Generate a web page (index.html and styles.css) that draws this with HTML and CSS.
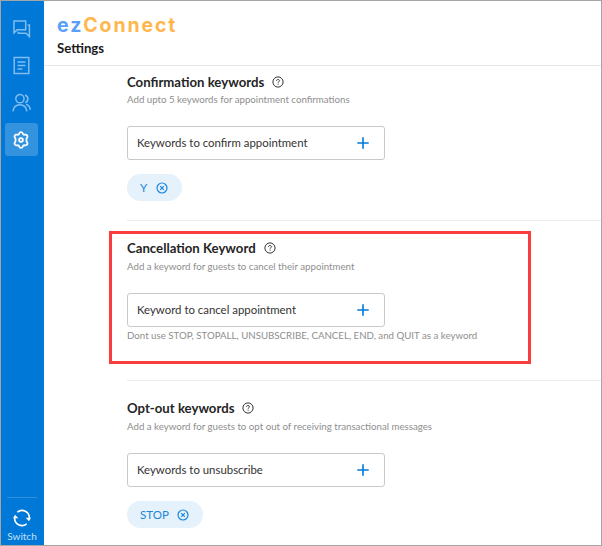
FILE: index.html
```
<!DOCTYPE html>
<html lang="en">
<head>
<meta charset="utf-8">
<title>ezConnect Settings</title>
<link rel="stylesheet" href="styles.css">
</head>
<body>
<svg class="defs" width="0" height="0" aria-hidden="true">
  <symbol id="help" viewBox="0 0 12 12"><circle cx="6" cy="6" r="5.1"/><path d="M4.500 4.900C4.500 4 5.200 3.500 6 3.500s1.500.5 1.500 1.200c0 .9-1.400 1-1.400 2M6.100 7.700v1"/></symbol>
  <symbol id="plus" viewBox="0 0 12 12"><path d="M6 .3v11.4M.3 6h11.4"/></symbol>
  <symbol id="remove" viewBox="0 0 12 12"><circle cx="6" cy="6" r="5"/><path d="M4.2 4.2l3.6 3.6M7.8 4.2L4.2 7.800"/></symbol>
</svg>
<div class="app">
  <nav class="sidebar">
    <a class="nav-item"><svg viewBox="0 0 24 24"><path d="M2.500 2.500h14.800v11.200H6.500L2.500 17.500zM19.800 7.500h2.200v14.700l-4.300-4.200H8v-1.900"/></svg></a>
    <a class="nav-item"><svg viewBox="0 0 24 24"><path d="M2.800 1.800h18.400v20.400H2.800zM7 7.500h10M7 12h10M7 16.500h6"/></svg></a>
    <a class="nav-item"><svg viewBox="0 0 24 24"><circle cx="10" cy="7.2" r="5.2"/><path d="M1.200 23.200c.7-5.500 3.900-8.500 8.800-8.500s8.100 3 8.800 8.500M16.500 2.600c4.600 1.600 4.700 7.600.3 9.500M17.800 14.300c2.900.8 4.700 3.200 5.400 6.900"/></svg></a>
    <a class="nav-item active"><svg viewBox="0 0 24 24"><path d="M12 1.600c1.500 0 2 .6 2.400 1.700.4 1.300 1.400 1.900 2.800 1.600 1.500-.3 2.300-.2 3.100 1.200.8 1.300.6 2-.4 3-.9 1.100-.9 4.700 0 5.800 1 1 1.200 1.700.4 3-.8 1.400-1.600 1.500-3.100 1.200-1.400-.3-2.400.3-2.800 1.600-.4 1.100-.9 1.700-2.400 1.700s-2-.6-2.400-1.700c-.4-1.300-1.400-1.900-2.800-1.600-1.500.3-2.300.2-3.100-1.200-.8-1.300-.6-2 .4-3 .9-1.100.9-4.700 0-5.800-1-1-1.200-1.700-.4-3 .8-1.400 1.600-1.500 3.100-1.200 1.400.3 2.400-.3 2.800-1.600.4-1.100.9-1.700 2.400-1.700z"/><circle cx="12" cy="12" r="2.500"/></svg></a>
    <div class="switch">
      <svg viewBox="0 0 18 18"><path d="M4.300 3.200A7.300 7.300 0 0 1 16.300 9.400M13.700 14.800A7.300 7.300 0 0 1 1.700 8.600"/><path class="tip" d="M12.700 8.700h5.300l-2 3.600zM0 9.300h5.300L2 5.700z"/></svg>
      <span>Switch</span>
    </div>
  </nav>
  <main class="page">
    <header class="header">
      <div class="logo"><span>ez</span>Connect</div>
      <h1>Settings</h1>
    </header>
    <section class="section">
      <h2>Confirmation keywords <svg class="help"><use href="#help"/></svg></h2>
      <p>Add upto 5 keywords for appointment confirmations</p>
      <div class="field"><span>Keywords to confirm appointment</span><svg class="plus"><use href="#plus"/></svg></div>
      <div class="chip chip-y">Y <svg class="remove"><use href="#remove"/></svg></div>
    </section>
    <section class="section highlighted">
      <h2>Cancellation Keyword <svg class="help"><use href="#help"/></svg></h2>
      <p>Add a keyword for guests to cancel their appointment</p>
      <div class="field"><span>Keyword to cancel appointment</span><svg class="plus"><use href="#plus"/></svg></div>
      <p class="hint">Dont use STOP, STOPALL, UNSUBSCRIBE, CANCEL, END, and QUIT as a keyword</p>
      <div class="outline"></div>
    </section>
    <section class="section">
      <h2>Opt-out keywords <svg class="help"><use href="#help"/></svg></h2>
      <p>Add a keyword for guests to opt out of receiving transactional messages</p>
      <div class="field"><span>Keywords to unsubscribe</span><svg class="plus"><use href="#plus"/></svg></div>
      <div class="chip chip-stop">STOP <svg class="remove"><use href="#remove"/></svg></div>
    </section>
  </main>
</div>
</body>
</html>
```
FILE: styles.css
```
* { box-sizing: border-box; }
body { margin: 0; font-family: Lato, sans-serif; background: #fff; color: #252525; }
h1, h2, p { margin: 0; }
svg { display: block; flex: none; fill: none; stroke: currentColor; }
.defs { position: absolute; }
.app { display: flex; width: 602px; height: 546px; border: 1px solid #a5a5a5; overflow: hidden; }

.sidebar { width: 43px; flex: none; background: #0078d7; display: flex; flex-direction: column; align-items: center; padding: 11px 3px 0 0; gap: 4px; color: #80bdf0; }
.nav-item { width: 33px; height: 33px; border-radius: 3px; display: flex; align-items: center; justify-content: center; }
.nav-item svg { width: 19px; height: 19px; stroke-width: 1.9; }
.nav-item.active { background: #3393df; color: #fff; }
.nav-item.active svg { width: 18px; height: 18px; stroke-width: 2.4; }
.switch { width: 30px; margin: auto 0 0 2px; border-top: 1px solid #3191df; padding-top: 11px; height: 48px; display: flex; flex-direction: column; align-items: center; color: #fff; }
.switch svg { width: 18px; height: 18px; stroke-width: 1.6; }
.switch .tip { fill: currentColor; stroke: none; }
.switch span { font-size: 10px; line-height: 14px; margin-top: 2px; color: #c4e0f7; }

.page { flex: 1; min-width: 0; }
.header { height: 65px; border-bottom: 1px solid #e7e7e7; padding: 12px 0 0 13px; }
.logo { font: 700 19.5px/24px Inter, sans-serif; letter-spacing: 1.9px; color: #ffb74d; }
.logo span { color: #5a9ffc; }
h1 { font-size: 13.2px; line-height: 20px; margin-top: 1px; color: #1c1c1c; }

.section { position: relative; margin-left: 83px; padding: 17px 0 19px; border-bottom: 1px solid #ececec; }
.section:first-of-type { padding-top: 6px; }
.section:last-child { border: 0; }
.highlighted { height: 160px; }
.outline { position: absolute; left: -18px; top: 10px; width: 422px; height: 133px; border: 3px solid #f93d3d; }
h2 { display: flex; align-items: center; gap: 8px; font-size: 13.2px; line-height: 20px; }
.help { width: 12px; height: 12px; color: #333; margin-top: -1px; }
p { font-size: 9.7px; line-height: 16px; color: #8e8e8e; white-space: nowrap; }
.section:first-of-type p { margin-top: -1px; }
.field { width: 258px; height: 34px; margin-top: 19px; border: 1px solid #c9c9c9; border-radius: 3px; padding: 0 15px 0 9px; display: flex; align-items: center; justify-content: space-between; font-size: 11.4px; color: #333; }
.field span { margin-top: -2px; }
.plus { width: 12px; height: 12px; color: #0078d7; stroke-width: 1.6; }
.chip { height: 27px; margin-top: 14px; border-radius: 14px; background: #e5f1fb; color: #1c86db; font-size: 11.6px; display: flex; align-items: center; justify-content: space-between; padding: 0 14px 0 13px; }
.chip-y { width: 55px; }
.chip-stop { width: 76px; }
.remove { width: 12px; height: 12px; stroke-width: 1.2; }
```
